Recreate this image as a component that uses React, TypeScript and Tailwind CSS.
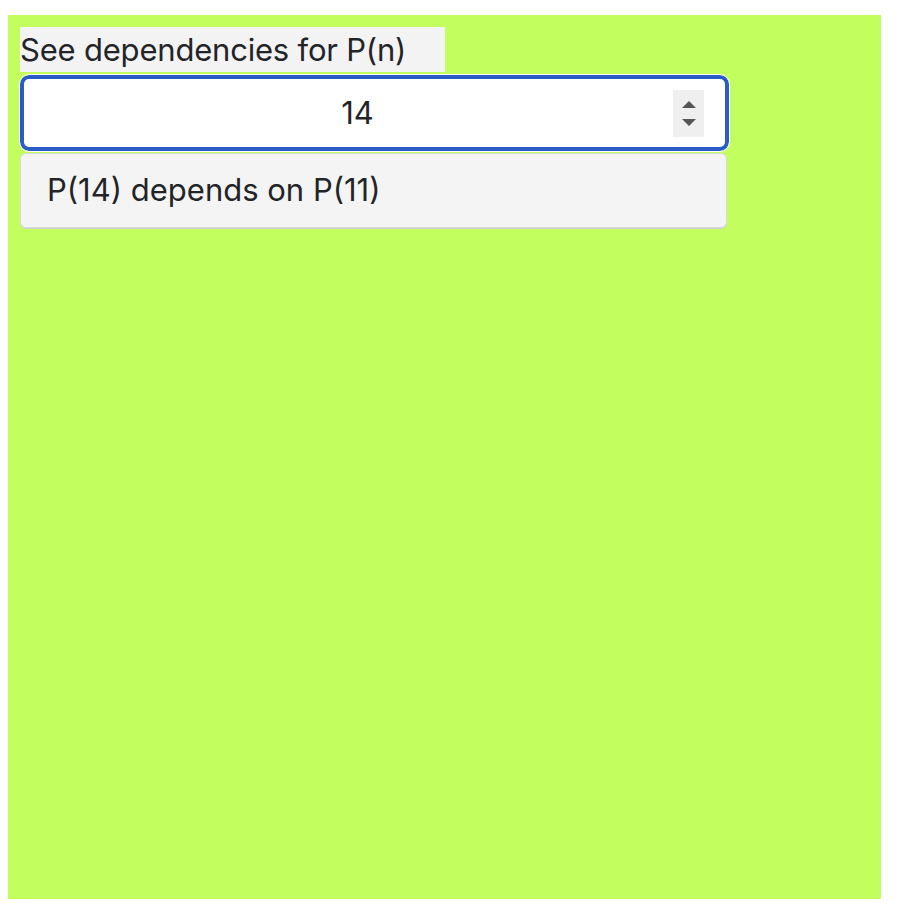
const App = () => {
  return (
    <div className="w-[908px] h-[924px] bg-white pt-[15px] pl-[8px]">
      <div className="w-[873px] h-[884px] bg-[#c2ff5e] p-[12px] font-['Inter','Liberation_Sans',Arial,sans-serif] text-[#222428]">
        <div className="w-[425px] h-[45px] bg-[#f3f3f3] pt-[5px] text-[31px] leading-[36px] tracking-[-0.2px]">See dependencies for P(n)</div>
        <div className="mt-[3px] w-[709px] h-[76px] rounded-[9px] bg-white border-[4px] border-[#2a5cc7] outline outline-1 outline-white flex items-center relative">
          <div className="flex-1 text-center text-[31px] pr-[34px]">14</div>
          <div className="absolute right-[21px] top-[11px] w-[31px] h-[47px] bg-[#efefef] flex flex-col items-center justify-center gap-[11px]">
            <svg width="14" height="7" viewBox="0 0 14 7"><path d="M0 7 L7 0 L14 7 Z" fill="#555" /></svg>
            <svg width="14" height="7" viewBox="0 0 14 7"><path d="M0 0 L7 7 L14 0 Z" fill="#555" /></svg>
          </div>
        </div>
        <div className="mt-[2px] w-[707px] h-[75px] rounded-[6px] bg-[#f4f4f4] border border-[#d9d9d9] shadow-[0_1px_0_#cfcfcf] flex items-center pl-[26px] text-[31px]">P(14) depends on P(11)</div>
      </div>
    </div>
  )
}

export default App
